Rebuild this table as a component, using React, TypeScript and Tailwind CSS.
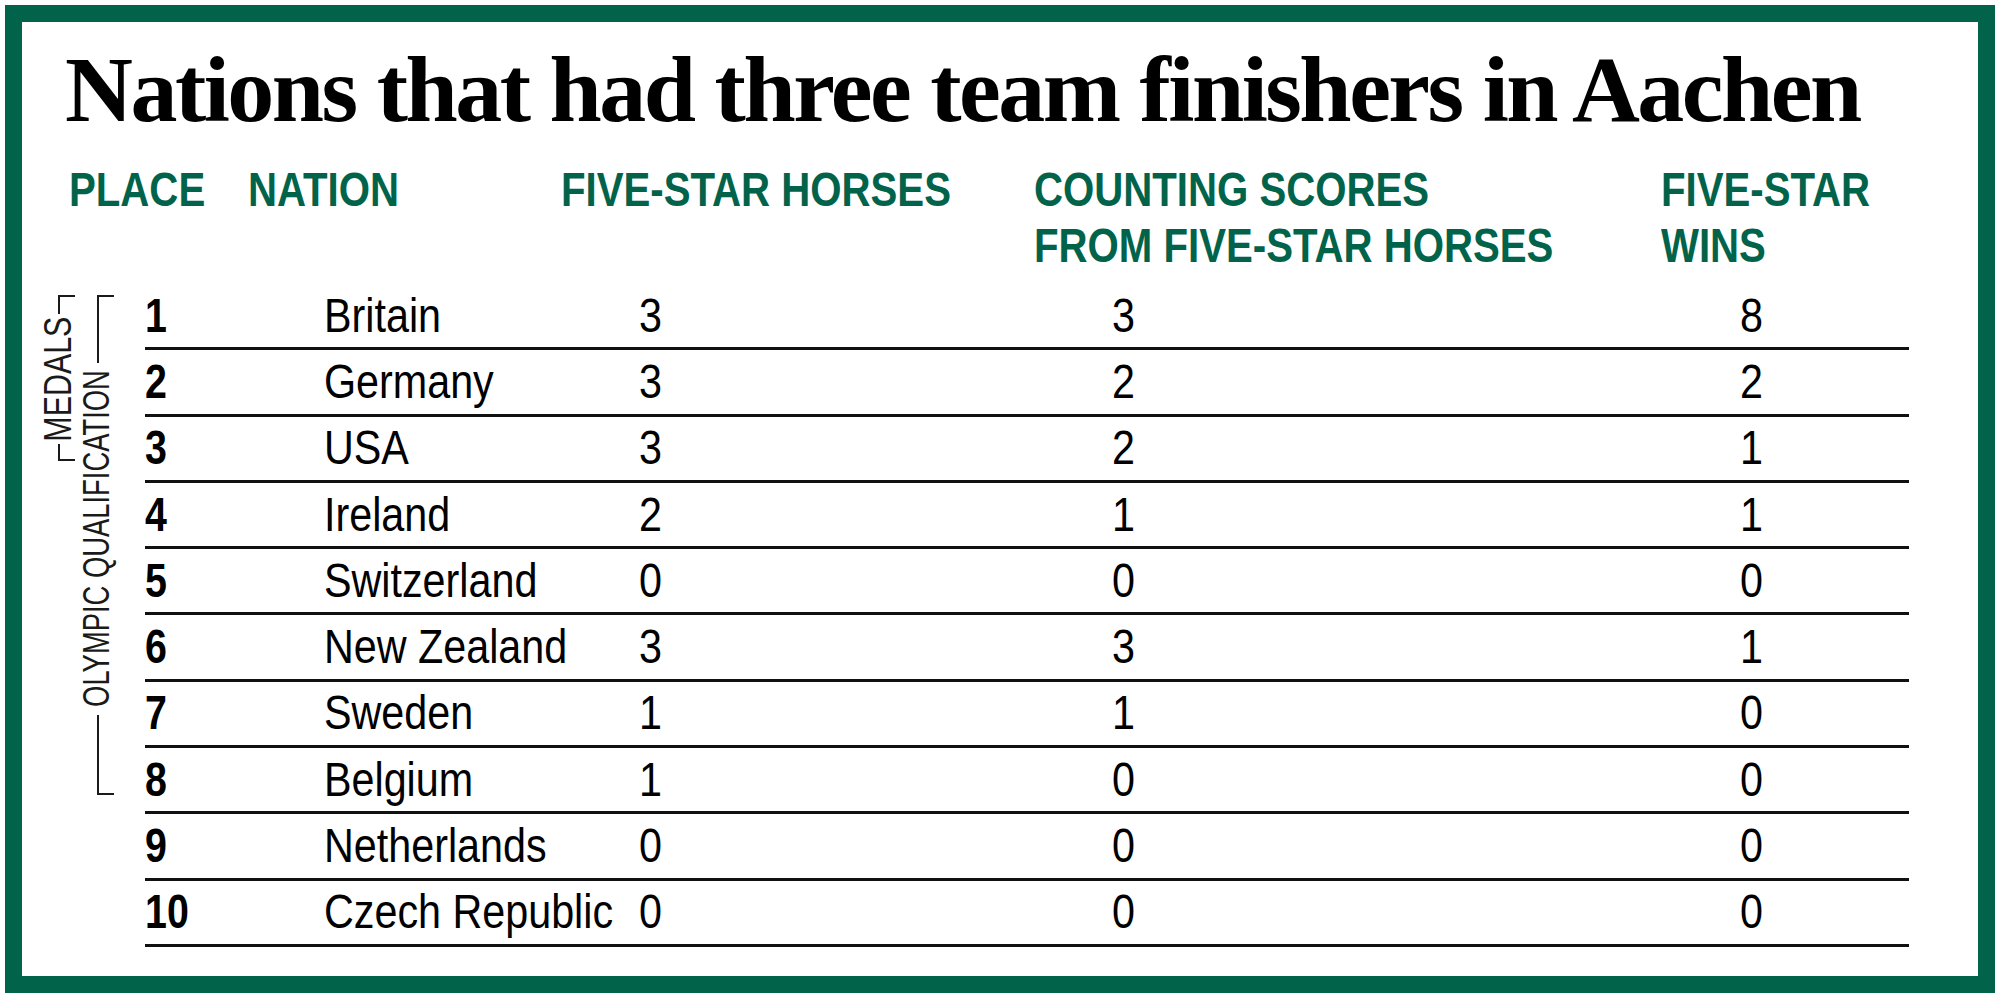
const rows: [number, string, number, number, number][] = [
  [1, "Britain", 3, 3, 8],
  [2, "Germany", 3, 2, 2],
  [3, "USA", 3, 2, 1],
  [4, "Ireland", 2, 1, 1],
  [5, "Switzerland", 0, 0, 0],
  [6, "New Zealand", 3, 3, 1],
  [7, "Sweden", 1, 1, 0],
  [8, "Belgium", 1, 0, 0],
  [9, "Netherlands", 0, 0, 0],
  [10, "Czech Republic", 0, 0, 0],
];

// condensed look: Liberation Sans squeezed horizontally
const narrowHead = "inline-block origin-left scale-x-[0.82] whitespace-nowrap";
const narrowBody = "inline-block origin-left scale-x-[0.86] whitespace-nowrap";

function Bracket({
  label,
  height,
  top,
  mid,
  text,
}: {
  label: string;
  height: string;
  top: string;
  mid: string;
  text: string;
}) {
  return (
    <div className={`flex w-[28px] flex-col ${height}`}>
      <div className={`ml-[14px] w-[17px] border-l-2 border-t-2 border-[#1a1a1a] ${top}`} />
      <div className={`flex items-center justify-center ${mid}`}>
        <span
          className={`rotate-180 whitespace-nowrap leading-[28px] text-[#1a1a1a] [writing-mode:vertical-rl] ${text}`}
        >
          {label}
        </span>
      </div>
      <div className="ml-[14px] w-[17px] flex-1 border-b-2 border-l-2 border-[#1a1a1a]" />
    </div>
  );
}

export default function App() {
  return (
    <div className="h-[1004px] w-[2000px] bg-white pl-[5px] pt-[5px]">
      <div className="h-[988px] w-[1990px] border-[17px] border-[#02634b] bg-white">
        {/* Title */}
        <h1 className="whitespace-nowrap pl-[43px] pt-[20px] font-['Liberation_Serif',serif] text-[94px] font-bold leading-[94px] tracking-[-2.5px] text-black">
          Nations that had three team finishers in Aachen
        </h1>

        <div className="font-['Liberation_Sans',Arial,sans-serif]">
          {/* Column headers */}
          <div className="mt-[25px] grid h-[112px] grid-cols-[179px_313px_473px_627px_1fr] pl-[47px] text-[49px] font-bold leading-[56px] text-[#02634b]">
            <div>
              <span className={narrowHead}>PLACE</span>
            </div>
            <div>
              <span className={narrowHead}>NATION</span>
            </div>
            <div>
              <span className={narrowHead}>FIVE-STAR HORSES</span>
            </div>
            <div>
              <span className={narrowHead}>
                COUNTING SCORES
                <br />
                FROM FIVE-STAR HORSES
              </span>
            </div>
            <div>
              <span className={narrowHead}>
                FIVE-STAR
                <br />
                WINS
              </span>
            </div>
          </div>

          {/* Body */}
          <div className="mt-[11px] flex">
            <div className="flex w-[123px] items-start gap-[11px] pl-[22px] pt-[11px]">
              <Bracket
                label="MEDALS"
                height="h-[166px]"
                top="h-[19px]"
                mid="h-[130px]"
                text="text-[38px] scale-y-[0.8]"
              />
              <Bracket
                label="OLYMPIC QUALIFICATION"
                height="h-[500px]"
                top="h-[68px]"
                mid="h-[352px]"
                text="text-[37px] scale-y-[0.74]"
              />
            </div>

            <div className="w-[1764px]">
              {rows.map(([place, nation, horses, scores, wins]) => (
                <div
                  key={place}
                  className="grid h-[66.3px] grid-cols-[179px_315px_473px_628px_1fr] items-center border-b-[3px] border-[#111] text-[48px] leading-none text-black"
                >
                  <div>
                    <span className={`${narrowHead} font-bold`}>{place}</span>
                  </div>
                  <div>
                    <span className={narrowBody}>{nation}</span>
                  </div>
                  <div>
                    <span className={narrowBody}>{horses}</span>
                  </div>
                  <div>
                    <span className={narrowBody}>{scores}</span>
                  </div>
                  <div>
                    <span className={narrowBody}>{wins}</span>
                  </div>
                </div>
              ))}
            </div>
          </div>
        </div>
      </div>
    </div>
  );
}
